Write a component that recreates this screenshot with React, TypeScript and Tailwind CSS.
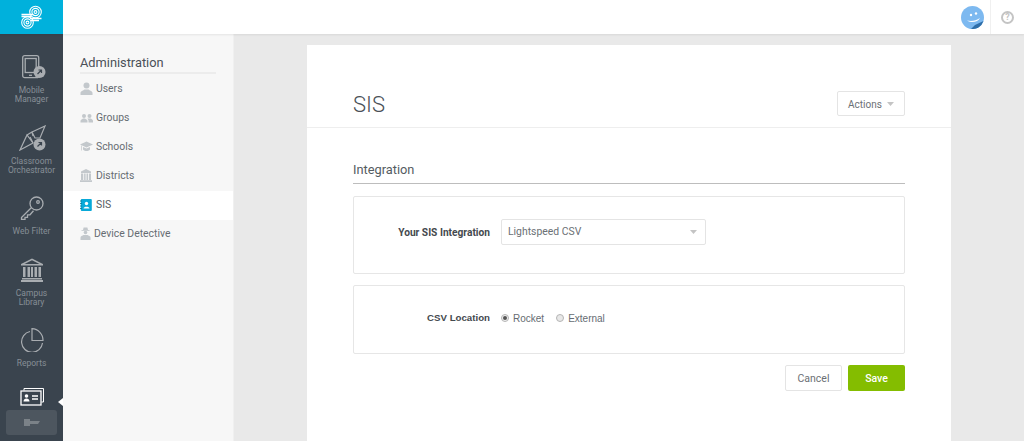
import React from 'react';

const RailItem = ({ label, icon, height, active }: { label: string[]; icon: React.ReactNode; height: string; active?: boolean }) => (
  <div className={`flex flex-col items-center ${height}`}>
    <div className="h-[39px] w-full flex items-center justify-center">{icon}</div>
    {label.map((l) => (
      <div key={l} className={`text-[8.5px] leading-[9px] ${active ? 'text-white' : 'text-[#878f96]'}`}>{l}</div>
    ))}
  </div>
);

const Badge = ({ cx, cy }: { cx: number; cy: number }) => (
  <g>
    <circle cx={cx} cy={cy} r="6" fill="#a9adb1" stroke="none" />
    <path d={`M${cx - 2} ${cy + 2}l4-4m-3 0h3v3`} stroke="#3a444e" strokeWidth="1.2" fill="none" />
  </g>
);

const MobileIcon = () => (
  <svg className="ml-[4px]" width="24" height="24" viewBox="0 0 24 24" fill="none" stroke="#a9adb1" strokeWidth="1.3">
    <rect x="0.700" y="0.700" width="16" height="22" rx="2" />
    <rect x="3.200" y="3.500" width="11" height="14" />
    <path d="M7 20.300h3" />
    <Badge cx={17.5} cy={17} />
  </svg>
);

const OrchestratorIcon = () => (
  <svg className="ml-[3px]" width="28" height="26" viewBox="0 0 28 26" fill="none" stroke="#a9adb1" strokeWidth="1.200">
    <path d="M1 25L8 10l6 8z" />
    <path d="M8 10l5-3 1 4M13 7L26 1l-5 12-5 0-3-6" />
    <path d="M14 18l-3-6" />
    <Badge cx={20.5} cy={19.5} />
  </svg>
);

const KeyIcon = () => (
  <svg width="24" height="24" viewBox="0 0 24 24" fill="none" stroke="#a9adb1" strokeWidth="1.300">
    <circle cx="16.500" cy="7.500" r="6.500" />
    <circle cx="18" cy="6" r="1.300" />
    <path d="M11.500 11.500L1.500 21.500v2h3.500v-2.200h2.500v-2.500h2.500l3.500-4" />
  </svg>
);

const LibraryIcon = () => (
  <svg width="24" height="24" viewBox="0 0 24 24" fill="#a9adb1">
    <path d="M12 0.500L23 6v1.500H1V6zM12 2.200L4.500 6h15z" fillRule="evenodd" />
    <path d="M3 9h2.500v10H3zM7.500 9H10v10H7.500zM11 9h2v10h-2zM14.500 9H17v10h-2.500zM18.500 9H21v10h-2.500zM2 20h20v1.500H2zM1 22h22v2H1z" />
  </svg>
);

const PieIcon = () => (
  <svg width="24" height="24" viewBox="0 0 24 24" fill="none" stroke="#a9adb1" strokeWidth="1.2">
    <path d="M10 3.500a10.500 10.500 0 1 0 12.500 11.500" />
    <path d="M12 0.700v11.800h11A11.500 11.500 0 0 0 12 0.700z" />
  </svg>
);

const CardsIcon = () => (
  <svg width="24" height="18" viewBox="0 0 24 18" fill="none" stroke="#ffffff" strokeWidth="1">
    <path d="M4 2.500V.5h19.500v13.500h-2" />
    <rect x="1" y="3" width="20" height="14" fill="#3a444e" strokeWidth="1.300" />
    <circle cx="6.500" cy="8" r="1.800" fill="#fff" stroke="none" />
    <path d="M3.500 13.500c0-4 6-4 6 0z" fill="#fff" stroke="none" />
    <path d="M12 8h6M12 11h6" strokeWidth="1.300" />
  </svg>
);

const grey = '#c3c8cc';

const UserIcon = () => (
  <svg width="13" height="13" viewBox="0 0 13 13" fill={grey}>
    <circle cx="6.500" cy="3.500" r="3" />
    <path d="M0.500 13v-2c0-2 3-2.500 4-3.500h4c1 1 4 1.500 4 3.500v2z" />
  </svg>
);

const GroupIcon = () => (
  <svg width="13" height="10" viewBox="0 0 13 10" fill={grey}>
    <circle cx="4" cy="3" r="2" />
    <circle cx="9.500" cy="3" r="2" />
    <path d="M0.500 9.500V8c0-1.500 2-2 2.500-2.500h2C5.500 6 7.500 6.500 7.500 8v1.500zM8.500 9.500V7.500L7.500 5.500h3.500c.5.500 2 1 2 2.500v1.500z" />
  </svg>
);

const SchoolIcon = () => (
  <svg width="13" height="13" viewBox="0 0 13 13" fill={grey}>
    <path d="M6.500 1.500L13 4.500 6.500 7.500 0 4.500z" />
    <path d="M3 7l3.500 1.500L10 7v2.500c-1 1-2.500 1.500-3.500 1.500S4 10.500 3 9.500z" />
    <path d="M1 5.500h.7v5H1z" />
  </svg>
);

const DistrictIcon = () => (
  <svg width="12" height="13" viewBox="0 0 12 13" fill={grey}>
    <path d="M6 0L11 2.500V4H1V2.500z" />
    <path d="M1 4.500h2.200V11H1zM4.100 4.500h1.500V11H4.100zM6.500 4.500H8V11H6.500zM8.900 4.500H11V11H8.900zM0 11.300h12V13H0z" />
  </svg>
);

const SisIcon = () => (
  <svg width="12" height="12" viewBox="0 0 12 12">
    <rect x="0.800" width="11" height="12" rx="1" fill="#08a9d8" />
    <path d="M0 2h1.800M0 4.500h1.800M0 7h1.800M0 9.500h1.800" stroke="#076f8e" strokeWidth="0.800" />
    <circle cx="6.500" cy="4.500" r="1.700" fill="#fff" />
    <path d="M3.500 9.500c0-2.500 6-2.500 6 0z" fill="#fff" />
  </svg>
);

const DetectiveIcon = () => (
  <svg width="11" height="13" viewBox="0 0 11 13" fill={grey}>
    <path d="M3 3l.6-2.500h3.800L8 3z" />
    <path d="M1.500 3.200h8v.8h-8z" />
    <circle cx="5.500" cy="5.500" r="1.800" />
    <path d="M0.500 13v-2.500c0-1.500 2-2 3-2.500h4c1 .5 3 1 3 2.500V13z" />
  </svg>
);

const LogoIcon = () => (
  <svg width="21" height="24" viewBox="0 0 21 24" fill="none" stroke="#ffffff" strokeWidth="1.100">
    <circle cx="14.500" cy="7" r="5.800" />
    <circle cx="14.500" cy="7" r="3.600" />
    <circle cx="14.500" cy="7" r="1.400" />
    <circle cx="6.500" cy="17.500" r="5.800" />
    <circle cx="6.500" cy="17.500" r="3.600" />
    <circle cx="6.500" cy="17.500" r="1.400" />
    <path d="M0.500 9.500h12M0.500 11.500h10M9 13.500h11.500M10 15.500h8" strokeWidth="1.300" />
  </svg>
);

const AvatarIcon = () => (
  <svg width="23" height="23" viewBox="0 0 23 23">
    <circle cx="11.500" cy="11.500" r="11.500" fill="#7db9f0" />
    <path d="M10 22.900A11.500 11.500 0 0 0 22.500 15L14 19z" fill="#2f6ea8" />
    <circle cx="10" cy="9" r="1.200" fill="#fff" />
    <circle cx="15" cy="7.500" r="1.200" fill="#fff" />
    <path d="M6 14.500c4 1 9 .5 13-2.500-2 4-8 5.500-13 2.500z" fill="#fff" />
  </svg>
);

const Caret = ({ color = '#c4c4c4' }: { color?: string }) => (
  <svg width="7" height="4" viewBox="0 0 7 4">
    <path d="M0 0h7L3.500 4z" fill={color} />
  </svg>
);

const subLinks = [
  { name: 'Users', icon: <UserIcon />, gap: 'ml-[3px]' },
  { name: 'Groups', icon: <GroupIcon />, gap: 'ml-[3px]' },
  { name: 'Schools', icon: <SchoolIcon />, gap: 'ml-[3px]' },
  { name: 'Districts', icon: <DistrictIcon />, gap: 'ml-[3px]' },
  { name: 'SIS', icon: <SisIcon />, gap: 'ml-[3px]', active: true },
  { name: 'Device Detective', icon: <DetectiveIcon />, gap: 'ml-[1px]' },
];

const App: React.FC = () => {
  return (
    <div className="h-[441px] w-[1024px] overflow-hidden flex flex-col bg-[#e9e9e9] font-['Roboto',sans-serif] text-[#555c62]">
      <div className="flex relative z-10 shadow-[0_1px_2px_rgba(0,0,0,0.08)]">
        <div className="w-[63px] h-[34px] bg-[#00b1dc] flex items-center justify-center shrink-0">
          <LogoIcon />
        </div>
        <div className="flex-1 h-[34px] bg-white flex justify-end items-center">
          <AvatarIcon />
          <div className="ml-[6px] w-[34px] h-[34px] border-l border-[#f0f0f0] flex items-center justify-center">
            <div className="w-[13px] h-[13px] rounded-full border-2 border-[#c4c4c4] text-[#c4c4c4] text-[9px] leading-[9px] font-bold flex items-center justify-center">?</div>
          </div>
        </div>
      </div>

      <div className="flex flex-1 min-h-0">
        <div className="relative w-[63px] bg-[#3a444e] shrink-0 pt-[13px]">
          <RailItem label={['Mobile', 'Manager']} icon={<MobileIcon />} height="h-[71px]" />
          <RailItem label={['Classroom', 'Orchestrator']} icon={<OrchestratorIcon />} height="h-[70px]" />
          <RailItem label={['Web Filter']} icon={<KeyIcon />} height="h-[62px]" />
          <RailItem label={['Campus', 'Library']} icon={<LibraryIcon />} height="h-[70px]" />
          <RailItem label={['Reports']} icon={<PieIcon />} height="h-[62px]" />
          <RailItem label={[]} icon={<CardsIcon />} height="h-[30px]" active />
          <div className="absolute right-0 top-[364px] w-0 h-0 border-y-[4px] border-y-transparent border-r-[5px] border-r-white" />
          <div className="absolute left-[6px] top-[376px] w-[51px] h-[25px] rounded-[3px] bg-[#4d565f] flex items-center justify-center">
            <svg width="16" height="7" viewBox="0 0 16 7" fill="#7b8288">
              <path d="M0 0h6v2h10l-2 3H6v2H0z" />
            </svg>
          </div>
        </div>

        <div className="w-[171px] bg-[#f7f7f7] shrink-0 border-r border-[#f0f0f0]">
          <div className="mx-[17px] mt-[12px] h-[28px] border-b-2 border-[#ececec] text-[12.8px] leading-[34px] text-[#4a5057]">Administration</div>
          <ul className="mt-[1px]">
            {subLinks.map((link) => (
              <li
                key={link.name}
                className={`h-[29px] pb-[2px] flex items-center pl-[17px] text-[10.4px] ${link.active ? 'bg-white text-[#555c62]' : 'text-[#666c72]'}`}
              >
                <span className="flex justify-start min-w-[13px]">{link.icon}</span>
                <span className={link.gap}>{link.name}</span>
              </li>
            ))}
          </ul>
        </div>

        <div className="flex-1 pl-[73px] pt-[11px] pr-[73px]">
          <div className="w-[644px] h-full bg-white">
            <div className="h-[83px] border-b border-[#eeeeee] px-[46px] flex items-end justify-between pb-[11px]">
              <h1 className="text-[22px] leading-[26px] font-light text-[#4a5057] mb-[-2px]">SIS</h1>
              <button className="w-[68px] h-[25px] pt-[1px] border border-[#e4e4e4] rounded-[2px] text-[10px] text-[#6b7075] flex items-center justify-center gap-[5px]">
                Actions <Caret />
              </button>
            </div>

            <div className="px-[46px]">
              <div className="mt-[32px] h-[24px] border-b border-[#bdbdbd] text-[12.8px] leading-[20px] text-[#555c62]">Integration</div>
              <div className="mt-[12px] h-[78px] border border-[#e6e6e6] rounded-[2px] flex items-center pb-[7px]">
                <div className="w-[136px] mt-[2px] text-right text-[10.200px] font-bold text-[#44494e]">Your SIS Integration</div>
                <div className="ml-[11px] w-[205px] h-[26px] border border-[#e4e4e4] rounded-[2px] pl-[6px] pr-[8px] flex items-center justify-between text-[10.400px] text-[#6b7075]">
                  Lightspeed CSV <Caret />
                </div>
              </div>

              <div className="mt-[11px] h-[69px] pb-[2px] border border-[#e6e6e6] rounded-[2px] flex items-center font-['Liberation_Sans',sans-serif]">
                <div className="w-[136px] text-right text-[9.700px] font-bold text-[#44494e]">CSV Location</div>
                <div className="ml-[11px] flex items-center text-[10px] text-[#666c72]">
                  <span className="w-[8px] h-[8px] mt-[-2px] rounded-full border border-[#b5b5b5] bg-[#f0f0f0] flex items-center justify-center">
                    <span className="w-[4px] h-[4px] rounded-full bg-[#555]" />
                  </span>
                  <span className="ml-[4px]">Rocket</span>
                  <span className="ml-[12px] w-[8px] h-[8px] mt-[-2px] rounded-full border border-[#b5b5b5] bg-[#e8e8e8]" />
                  <span className="ml-[4px]">External</span>
                </div>
              </div>

              <div className="mt-[11px] flex justify-end gap-[6px]">
                <button className="w-[57px] h-[26px] pt-[1px] border border-[#e4e4e4] rounded-[2px] text-[10.500px] text-[#6b7075]">Cancel</button>
                <button className="w-[57px] h-[26px] pt-[1px] rounded-[2px] bg-[#84bd00] text-[10.500px] font-medium text-white">Save</button>
              </div>
            </div>
          </div>
        </div>
      </div>
    </div>
  );
};

export default App;
